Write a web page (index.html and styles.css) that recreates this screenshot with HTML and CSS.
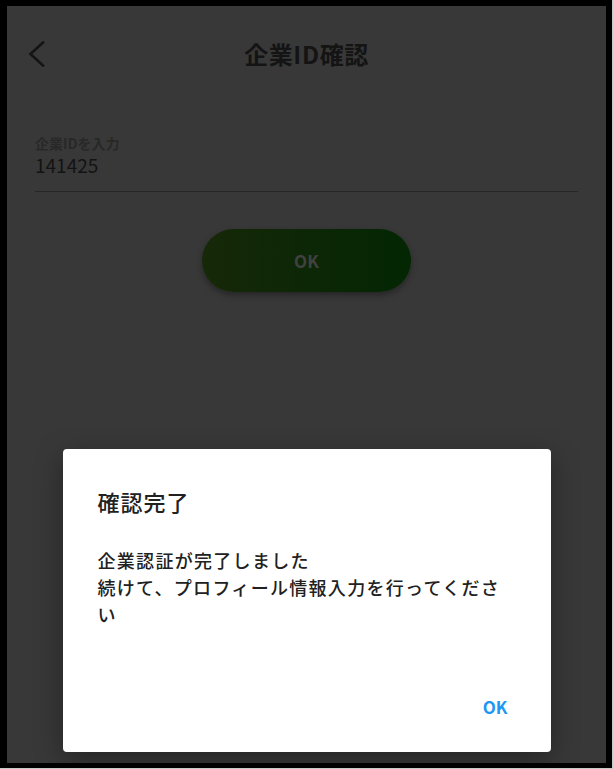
FILE: index.html
```html
<!DOCTYPE html>
<html lang="ja">
<head>
<meta charset="utf-8">
<title>企業ID確認</title>
<link rel="stylesheet" href="styles.css">
</head>
<body>
<div class="shot">
  <div class="screen">
    <header class="app-bar">
      <div class="back">
        <svg width="17" height="26" viewBox="0 0 17 26" aria-hidden="true">
          <polyline points="15,1.5 2.5,13 15,24.5" fill="none" stroke="#141414" stroke-width="2.6" stroke-linecap="square" stroke-linejoin="miter"/>
        </svg>
      </div>
      <h1 class="title">企業ID確認</h1>
      <div></div>
    </header>

    <div class="field">
      <div class="field-label">企業IDを入力</div>
      <div class="field-value">141425</div>
    </div>

    <div class="actions">
      <div class="ok-btn">OK</div>
    </div>

    <div class="backdrop">
      <div class="dialog">
        <h2 class="dialog-title">確認完了</h2>
        <p class="dialog-body">企業認証が完了しました<br>続けて、プロフィール情報入力を行ってください</p>
        <div class="dialog-actions"><span class="dialog-ok">OK</span></div>
      </div>
    </div>
  </div>
</div>
</body>
</html>
```

FILE: styles.css
```css
html, body {
  margin: 0;
  padding: 0;
  background: #000;
}

body {
  font-family: "Noto Sans CJK JP", "Noto Sans", sans-serif;
}

.shot {
  width: 613px;
  height: 769px;
  box-sizing: border-box;
  background: #000;
  border-right: 1px solid #c8c8c8;
  border-bottom: 1px solid #c8c8c8;
  padding: 6px 6px 5px 7px;
}

.screen {
  position: relative;
  height: 757px;
  background: #383838;
  overflow: hidden;
}

.app-bar {
  height: 96px;
  display: grid;
  grid-template-columns: 1fr auto 1fr;
  align-items: center;
}

.back {
  padding-left: 21px;
  display: flex;
  align-items: center;
}

.back svg {
  display: block;
}

.title {
  margin: 0;
  font-size: 24px;
  font-weight: 700;
  line-height: 32px;
  letter-spacing: 0.6px;
  color: #141414;
}

.field {
  margin: 33px 28px 0;
  padding-bottom: 15px;
  border-bottom: 1px solid #262626;
}

.field-label {
  font-size: 14px;
  line-height: 17px;
  font-weight: 700;
  color: #282828;
  margin-bottom: 2px;
}

.field-value {
  font-size: 19px;
  line-height: 22px;
  color: #131313;
}

.actions {
  display: flex;
  justify-content: center;
  margin-top: 37px;
}

.ok-btn {
  width: 209px;
  height: 63px;
  border-radius: 32px;
  background: linear-gradient(to right, #162808, #032603);
  box-shadow: 0 3px 6px rgba(0, 0, 0, 0.35);
  display: flex;
  align-items: center;
  justify-content: center;
  font-size: 17px;
  font-weight: 700;
  color: #414141;
}

.backdrop {
  position: absolute;
  inset: 0;
  display: flex;
  flex-direction: column;
  justify-content: flex-end;
  align-items: center;
  padding-bottom: 11px;
}

.dialog {
  width: 488px;
  box-sizing: border-box;
  background: #fff;
  border-radius: 4px;
  box-shadow: 0 8px 28px rgba(0, 0, 0, 0.35);
  padding: 37px 43px 33px 35px;
}

.dialog-title {
  margin: 0;
  font-size: 22px;
  line-height: 30px;
  font-weight: 500;
  letter-spacing: 1px;
  color: #212121;
}

.dialog-body {
  margin: 31px 0 0;
  width: 418px;
  font-size: 18px;
  line-height: 27px;
  font-weight: 500;
  letter-spacing: 1.3px;
  color: #212121;
}

.dialog-actions {
  margin-top: 67px;
  display: flex;
  justify-content: flex-end;
}

.dialog-ok {
  font-size: 17px;
  line-height: 24px;
  font-weight: 700;
  color: #2196f3;
}
```
